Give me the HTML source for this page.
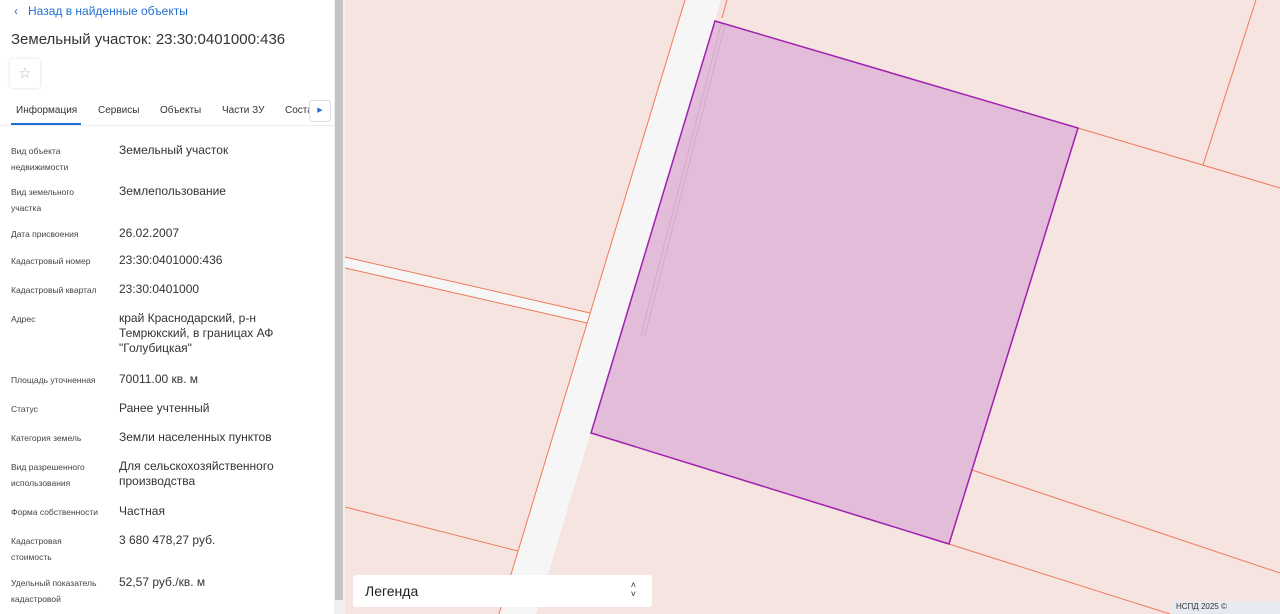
<!DOCTYPE html>
<html><head><meta charset="utf-8"><style>
*{margin:0;padding:0;box-sizing:border-box}
body{width:1280px;height:614px;overflow:hidden;font-family:"Liberation Sans",sans-serif;background:#f5e4e0;position:relative}
#side{position:absolute;left:0;top:0;width:334px;height:614px;background:#fff}
#sb{position:absolute;left:334px;top:0;width:11px;height:614px;background:#f0f0f0}
#sb div{position:absolute;left:1px;top:0;width:8px;height:600px;background:#c4c4c4}
.a{position:absolute;white-space:nowrap}
.l{position:absolute;left:11px;font-size:8.5px;color:#444;line-height:16px}
.v{position:absolute;left:119px;font-size:12px;color:#333;line-height:15px}
</style></head><body>
<svg style="position:absolute;left:0;top:0" width="1280" height="614">
<polygon points="685,0 721,0 536,614 499,614" fill="#f7f6f6"/>
<polygon points="345,257 590,313 587,323 345,268" fill="#f7f6f6"/>
<g stroke="#f07a5a" stroke-width="1" fill="none">
<line x1="685" y1="0" x2="499" y2="614"/>
<line x1="727" y1="0" x2="722" y2="18"/>
<line x1="345" y1="257" x2="590" y2="313"/>
<line x1="345" y1="268" x2="587" y2="323"/>
<line x1="1078" y1="128" x2="1280" y2="188"/>
<line x1="1256" y1="0" x2="1203" y2="165"/>
<line x1="972" y1="470" x2="1280" y2="573"/>
<line x1="949" y1="544" x2="1170" y2="614"/>
<line x1="345" y1="507" x2="518" y2="551"/>
</g>
<polygon points="715,21 1078,128 949,544 591,433" fill="#e2bcd8" stroke="#a020b0" stroke-width="1.5"/>
<polygon points="721,25 725,25 645,335 641,335" fill="none" stroke="#d7a8cc" stroke-width="1"/>
</svg>
<div id="side">
<div class="a" style="left:14px;top:4px;font-size:12px;color:#1f6fd6">‹&nbsp;&nbsp;&nbsp;Назад в найденные объекты</div>
<div class="a" style="left:11px;top:31px;font-size:15px;color:#333">Земельный участок: 23:30:0401000:436</div>
<div class="a" style="left:10px;top:59px;width:30px;height:29px;border-radius:3px;box-shadow:0 0 3px rgba(0,0,0,.15);color:#bbb;font-size:15px;text-align:center;line-height:29px">☆</div>
<div class="a" style="left:16px;top:105px;font-size:10px;color:#333">Информация</div>
<div class="a" style="left:11px;top:123px;width:70px;height:2px;background:#1f6fd6"></div>
<div class="a" style="left:98px;top:105px;font-size:10px;color:#333">Сервисы</div>
<div class="a" style="left:160px;top:105px;font-size:10px;color:#333">Объекты</div>
<div class="a" style="left:222px;top:105px;font-size:10px;color:#333">Части ЗУ</div>
<div class="a" style="left:285px;top:105px;font-size:10px;color:#333">Соста</div>
<div class="a" style="left:309px;top:100px;width:22px;height:22px;background:#fff;border:1px solid #dde;border-radius:3px;font-size:7px;color:#1f6fd6;text-align:center;line-height:20px">▶</div>
<div class="a" style="left:0;top:125px;width:334px;height:1px;background:#eee"></div>
<div class="l" style="top:143px">Вид объекта<br>недвижимости</div><div class="v" style="top:143px">Земельный участок</div>
<div class="l" style="top:184px">Вид земельного<br>участка</div><div class="v" style="top:184px">Землепользование</div>
<div class="l" style="top:226px">Дата присвоения</div><div class="v" style="top:226px">26.02.2007</div>
<div class="l" style="top:253px">Кадастровый номер</div><div class="v" style="top:253px">23:30:0401000:436</div>
<div class="l" style="top:282px">Кадастровый квартал</div><div class="v" style="top:282px">23:30:0401000</div>
<div class="l" style="top:311px">Адрес</div><div class="v" style="top:311px">край Краснодарский, р-н<br>Темрюкский, в границах АФ<br>"Голубицкая"</div>
<div class="l" style="top:372px">Площадь уточненная</div><div class="v" style="top:372px">70011.00 кв. м</div>
<div class="l" style="top:401px">Статус</div><div class="v" style="top:401px">Ранее учтенный</div>
<div class="l" style="top:430px">Категория земель</div><div class="v" style="top:430px">Земли населенных пунктов</div>
<div class="l" style="top:459px">Вид разрешенного<br>использования</div><div class="v" style="top:459px">Для сельскохозяйственного<br>производства</div>
<div class="l" style="top:504px">Форма собственности</div><div class="v" style="top:504px">Частная</div>
<div class="l" style="top:533px">Кадастровая<br>стоимость</div><div class="v" style="top:533px">3 680 478,27 руб.</div>
<div class="l" style="top:575px">Удельный показатель<br>кадастровой</div><div class="v" style="top:575px">52,57 руб./кв. м</div>
</div>
<div id="sb"><div></div></div>
<div class="a" style="left:353px;top:575px;width:299px;height:32px;background:#fff;border-radius:3px;font-size:14px;color:#222;padding:8px 12px">Легенда<span style="position:absolute;right:16px;top:6px;font-size:9px;line-height:9px;text-align:center">˄<br>˅</span></div>
<div class="a" style="left:1172px;top:601px;width:108px;height:13px;background:#e8eaf2;font-size:8px;color:#333;padding:1px 4px">НСПД 2025 ©</div>
</body></html>
